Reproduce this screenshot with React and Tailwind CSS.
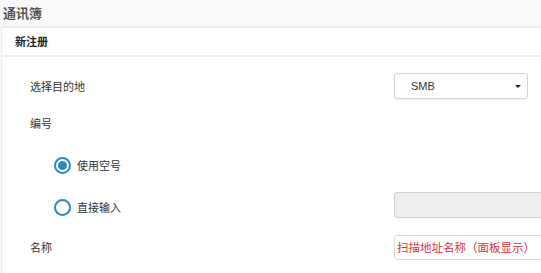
import React from "react";

const cjk = { fontFamily: '"Noto Sans CJK SC", "Liberation Sans", sans-serif' };

function Radio({ checked }) {
  return (
    <span className="flex h-[17px] w-[17px] items-center justify-center rounded-full border-2 border-[#2a8ac0] bg-white">
      {checked && <span className="h-[9px] w-[9px] rounded-full bg-[#2a8ac0]" />}
    </span>
  );
}

export default function App() {
  return (
    <div className="h-[273px] w-[541px] overflow-hidden bg-[#f9f9f9] text-[#333]" style={cjk}>
      <div className="flex h-[26px] items-center pl-[3px] text-[13px] font-bold text-[#555]">通讯簿</div>
      <div className="ml-[1px] border-l border-t-2 border-[#ececec] bg-white">
        <div className="flex h-[29px] items-center border-b-2 border-[#eeeeee] pl-[13px] text-[11px] font-bold text-[#222]">
          新注册
        </div>
        <div className="pt-[16px] pb-[20px] text-[11px]">
          <div className="flex h-[26px] items-center">
            <div className="w-[392px] shrink-0 pl-[28px]">选择目的地</div>
            <div className="relative flex h-[26px] w-[134px] shrink-0 items-center rounded-[3px] border border-[#d4d4d4] bg-white pl-[16px] shadow-[0_1px_1px_rgba(0,0,0,0.05)]">
              <span className="text-[11px] text-[#333]" style={{ fontFamily: '"Liberation Sans", sans-serif' }}>SMB</span>
              <span className="absolute right-[6px] top-[11px] h-0 w-0 border-l-[3px] border-r-[3px] border-t-[3px] border-l-transparent border-r-transparent border-t-[#222]" />
            </div>
          </div>
          <div className="mt-[11px] flex h-[26px] items-center">
            <div className="w-[392px] shrink-0 pl-[28px]">编号</div>
          </div>
          <div className="mt-[15px] flex h-[26px] items-center">
            <div className="flex w-[392px] shrink-0 items-center pl-[52px] pt-[3px]">
              <Radio checked />
              <span className="ml-[6px]">使用空号</span>
            </div>
          </div>
          <div className="mt-[15px] flex h-[26px] items-center">
            <div className="flex w-[392px] shrink-0 items-center pl-[52px] pt-[5px]">
              <Radio />
              <span className="ml-[6px]">直接输入</span>
            </div>
            <div className="h-[26px] w-[170px] shrink-0 rounded-[3px] border border-[#cfcfcf] bg-[#eeeeee]" />
          </div>
          <div className="mt-[17px] flex h-[25px] items-center">
            <div className="w-[392px] shrink-0 pl-[28px]">名称</div>
            <div className="flex h-[25px] w-[170px] shrink-0 items-center whitespace-nowrap rounded-[3px] border border-[#d8d8d8] bg-white pl-[2px] text-[11.5px] text-[#e0303c]">
              扫描地址名称（面板显示）
            </div>
          </div>
        </div>
      </div>
    </div>
  );
}
